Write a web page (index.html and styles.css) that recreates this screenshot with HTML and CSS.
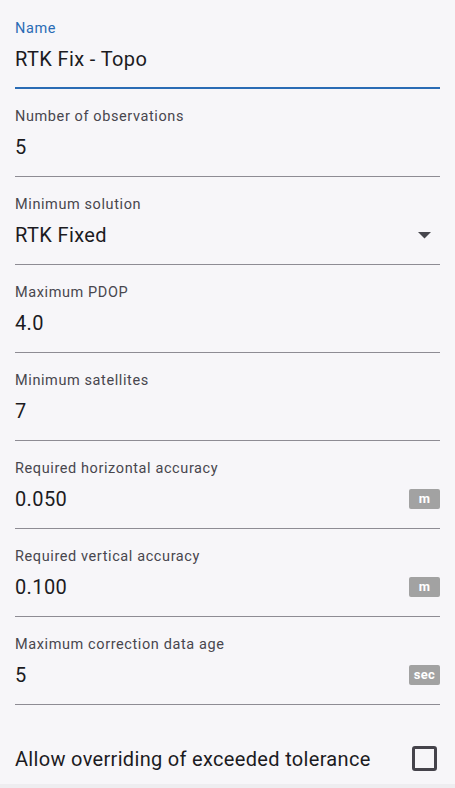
FILE: index.html
```html
<!DOCTYPE html>
<html lang="en">
<head>
<meta charset="utf-8">
<title>Accuracy settings</title>
<link rel="stylesheet" href="styles.css">
</head>
<body>
<main class="form">
  <div class="field field-focused">
    <div class="label">Name</div>
    <div class="value-row"><span class="value">RTK Fix - Topo</span></div>
  </div>
  <div class="field">
    <div class="label">Number of observations</div>
    <div class="value-row"><span class="value">5</span></div>
  </div>
  <div class="field">
    <div class="label">Minimum solution</div>
    <div class="value-row">
      <span class="value">RTK Fixed</span>
      <svg class="dropdown" width="13" height="7" viewBox="0 0 13 7"><polygon points="0,0 13,0 6.5,6.5" fill="#47464d"/></svg>
    </div>
  </div>
  <div class="field">
    <div class="label">Maximum PDOP</div>
    <div class="value-row"><span class="value">4.0</span></div>
  </div>
  <div class="field">
    <div class="label">Minimum satellites</div>
    <div class="value-row"><span class="value">7</span></div>
  </div>
  <div class="field">
    <div class="label">Required horizontal accuracy</div>
    <div class="value-row"><span class="value">0.050</span><span class="unit">m</span></div>
  </div>
  <div class="field">
    <div class="label">Required vertical accuracy</div>
    <div class="value-row"><span class="value">0.100</span><span class="unit">m</span></div>
  </div>
  <div class="field">
    <div class="label">Maximum correction data age</div>
    <div class="value-row"><span class="value">5</span><span class="unit">sec</span></div>
  </div>
  <div class="check-row">
    <span class="check-label">Allow overriding of exceeded tolerance</span>
    <span class="checkbox"></span>
  </div>
</main>
<div class="bottom-edge"></div>
</body>
</html>
```
FILE: styles.css
```css
html, body {
  margin: 0;
  padding: 0;
}
body {
  background: #f7f6f9;
  font-family: Roboto, "Noto Sans", sans-serif;
  color: #1c1b1f;
  height: 788px;
  overflow: hidden;
  display: flex;
  flex-direction: column;
}
.form {
  padding: 1px 15px 0 15px;
  display: flex;
  flex-direction: column;
}
.field {
  box-sizing: border-box;
  height: 88px;
  padding-top: 17.5px;
  border-bottom: 1px solid #8e8c94;
  display: flex;
  flex-direction: column;
}
.field-focused {
  border-bottom: 2px solid #2a6cb5;
}
.label {
  font-size: 14.5px;
  line-height: 20px;
  letter-spacing: 0.6px;
  color: #48464e;
}
.field-focused .label {
  color: #2a6cb5;
}
.value-row {
  margin-top: 6px;
  height: 28px;
  display: flex;
  align-items: center;
  justify-content: space-between;
}
.value {
  font-size: 20px;
  line-height: 28px;
  letter-spacing: 0.38px;
  color: #1c1b1f;
}
.dropdown {
  margin-right: 9px;
  margin-top: 1px;
}
.unit {
  box-sizing: border-box;
  width: 31px;
  height: 20px;
  margin-top: 1px;
  background: #a2a2a2;
  color: #ffffff;
  font-size: 13px;
  font-weight: 700;
  line-height: 20px;
  letter-spacing: 0.3px;
  text-align: center;
  border-radius: 2px;
}
.check-row {
  box-sizing: border-box;
  height: 79px;
  padding-top: 41px;
  display: flex;
  align-items: flex-start;
  justify-content: space-between;
}
.check-label {
  font-size: 20px;
  line-height: 28px;
  letter-spacing: 0.32px;
  margin-top: -1.5px;
  color: #1c1b1f;
}
.checkbox {
  box-sizing: border-box;
  width: 25px;
  height: 25px;
  margin-right: 3px;
  border: 3px solid #45434b;
  border-radius: 3px;
}
.bottom-edge {
  flex: 1;
  background: #eeedf0;
}
```
